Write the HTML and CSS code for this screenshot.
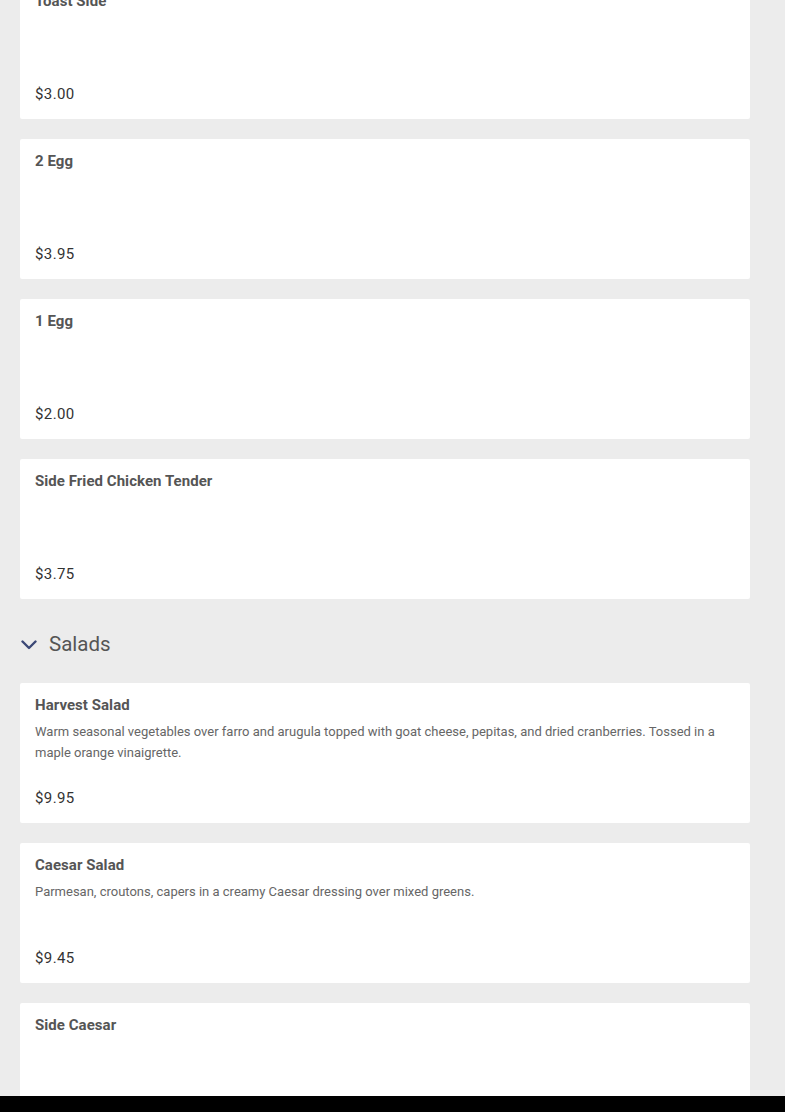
FILE: index.html
```html
<!DOCTYPE html>
<html lang="en">
<head>
<meta charset="utf-8">
<title>Menu</title>
<link rel="stylesheet" href="styles.css">
</head>
<body>
<main class="menu">
  <article class="item">
    <h3 class="item-name">Toast Side</h3>
    <p class="item-price">$3.00</p>
  </article>
  <article class="item">
    <h3 class="item-name">2 Egg</h3>
    <p class="item-price">$3.95</p>
  </article>
  <article class="item">
    <h3 class="item-name">1 Egg</h3>
    <p class="item-price">$2.00</p>
  </article>
  <article class="item">
    <h3 class="item-name">Side Fried Chicken Tender</h3>
    <p class="item-price">$3.75</p>
  </article>

  <h2 class="section-title">
    <svg class="chevron" width="16" height="10" viewBox="0 0 16 10" aria-hidden="true"><polyline points="1.5,1.5 8,8 14.5,1.5" fill="none" stroke="#3b4876" stroke-width="2.4" stroke-linecap="round" stroke-linejoin="round"/></svg>
    <span>Salads</span>
  </h2>

  <article class="item">
    <h3 class="item-name">Harvest Salad</h3>
    <p class="item-desc">Warm seasonal vegetables over farro and arugula topped with goat cheese, pepitas, and dried cranberries. Tossed in a maple orange vinaigrette.</p>
    <p class="item-price">$9.95</p>
  </article>
  <article class="item">
    <h3 class="item-name">Caesar Salad</h3>
    <p class="item-desc">Parmesan, croutons, capers in a creamy Caesar dressing over mixed greens.</p>
    <p class="item-price">$9.45</p>
  </article>
  <article class="item">
    <h3 class="item-name">Side Caesar</h3>
    <p class="item-price">$4.95</p>
  </article>
</main>
<div class="bottom-bar"></div>
</body>
</html>
```
FILE: styles.css
```css
html, body {
  margin: 0;
  padding: 0;
  background: #ececec;
  font-family: Roboto, "Liberation Sans", Arial, sans-serif;
}

.menu {
  width: 730px;
  margin: -21px 0 0 20px;
  display: flex;
  flex-direction: column;
}

.item {
  box-sizing: border-box;
  height: 140px;
  margin-bottom: 20px;
  padding: 12px 15px 15px;
  background: #fff;
  border-radius: 2px;
  display: flex;
  flex-direction: column;
}

.item-name {
  margin: 0;
  font-size: 15px;
  line-height: 20px;
  font-weight: 700;
  letter-spacing: 0.05px;
  color: #555;
}

.item-desc {
  margin: 6px 0 0;
  font-size: 13px;
  line-height: 21px;
  color: #666;
}

.item-price {
  margin: auto 0 0;
  font-size: 15px;
  line-height: 20px;
  letter-spacing: 0.4px;
  color: #333;
}

.section-title {
  height: 50px;
  margin: 0 0 14px;
  display: flex;
  align-items: center;
  gap: 12px;
  font-size: 20.5px;
  font-weight: 400;
  color: #555;
}

.chevron {
  margin-left: 1px;
  margin-top: 2px;
}

.bottom-bar {
  position: fixed;
  left: 0;
  right: 0;
  bottom: 0;
  height: 16px;
  background: #000;
}
```
